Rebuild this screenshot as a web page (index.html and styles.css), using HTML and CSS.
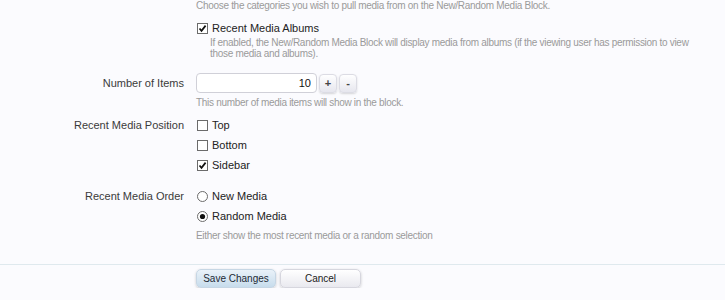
FILE: index.html
```html
<!DOCTYPE html>
<html lang="en">

<head>
    <meta charset="UTF-8">
    <title>Recent Media Options</title>
    <link rel="stylesheet" href="styles.css">
</head>

<body>

    <form class="options-form">

        <div class="row first-row">
            <div class="row-label"></div>
            <div class="row-ctrl">
                <p class="hint top-hint">Choose the categories you wish to pull media from on the New/Random Media Block.</p>
                <label class="opt">
                    <svg class="box" width="11" height="11" viewBox="0 0 11 11"><rect x="0.5" y="0.5" width="10" height="10" fill="#fff" stroke="#6b6b6b"/><path d="M2.5 5.5 L4.5 7.8 L8.6 2.6" fill="none" stroke="#111" stroke-width="1.7"/></svg>
                    Recent Media Albums
                </label>
                <p class="hint sub-hint">If enabled, the New/Random Media Block will display media from albums (if the viewing user has permission to view those media and albums).</p>
            </div>
        </div>

        <div class="row items-row">
            <div class="row-label">Number of Items</div>
            <div class="row-ctrl">
                <div class="spinbox">
                    <input class="num" type="text" value="10">
                    <span class="spin-btn">+</span>
                    <span class="spin-btn">-</span>
                </div>
                <p class="hint after-input">This number of media items will show in the block.</p>
            </div>
        </div>

        <div class="row position-row">
            <div class="row-label">Recent Media Position</div>
            <div class="row-ctrl">
                <label class="opt line">
                    <svg class="box" width="11" height="11" viewBox="0 0 11 11"><rect x="0.5" y="0.5" width="10" height="10" fill="#fff" stroke="#6b6b6b"/></svg>
                    Top
                </label>
                <label class="opt line">
                    <svg class="box" width="11" height="11" viewBox="0 0 11 11"><rect x="0.5" y="0.5" width="10" height="10" fill="#fff" stroke="#6b6b6b"/></svg>
                    Bottom
                </label>
                <label class="opt line">
                    <svg class="box" width="11" height="11" viewBox="0 0 11 11"><rect x="0.5" y="0.5" width="10" height="10" fill="#fff" stroke="#6b6b6b"/><path d="M2.5 5.5 L4.5 7.8 L8.6 2.6" fill="none" stroke="#111" stroke-width="1.7"/></svg>
                    Sidebar
                </label>
            </div>
        </div>

        <div class="row order-row">
            <div class="row-label">Recent Media Order</div>
            <div class="row-ctrl">
                <label class="opt line">
                    <svg class="box" width="11" height="11" viewBox="0 0 11 11"><circle cx="5.5" cy="5.5" r="5" fill="#fff" stroke="#6b6b6b"/></svg>
                    New Media
                </label>
                <label class="opt line">
                    <svg class="box" width="11" height="11" viewBox="0 0 11 11"><circle cx="5.5" cy="5.5" r="5" fill="#fff" stroke="#6b6b6b"/><circle cx="5.5" cy="5.5" r="2.6" fill="#111"/></svg>
                    Random Media
                </label>
                <p class="hint after-radio">Either show the most recent media or a random selection</p>
            </div>
        </div>

        <div class="submit-bar">
            <div class="row-label"></div>
            <div class="buttons">
                <button type="button" class="btn btn-primary">Save Changes</button>
                <button type="button" class="btn">Cancel</button>
            </div>
        </div>

    </form>

</body>

</html>
```

FILE: styles.css
```css
body {
    margin: 0;
    background-color: #fbfbfe;
    font-family: "Liberation Sans", Arial, sans-serif;
    font-size: 11px;
    color: #222222;
    overflow: hidden;
}

.options-form {
    margin: 0;
}

.row {
    display: grid;
    grid-template-columns: 184px 1fr;
    column-gap: 12px;
}

.row-label {
    text-align: right;
    color: #3a3a3a;
    line-height: 20px;
}

.row-ctrl {
    min-width: 0;
}

.hint {
    margin: 0;
    font-size: 10px;
    line-height: 11px;
    color: #9a9a9a;
    letter-spacing: -0.3px;
}

.top-hint {
    line-height: 12px;
}

.sub-hint {
    margin-top: 1px;
    padding-left: 14px;
    max-width: 490px;
}

.opt {
    display: flex;
    align-items: center;
    gap: 4px;
    line-height: 16px;
    margin-top: 8px;
    padding-left: 1px;
    color: #222222;
}

.opt.line {
    line-height: 20px;
    margin-top: 0;
}

.box {
    flex: none;
}

.items-row {
    margin-top: 14px;
}

.spinbox {
    display: flex;
    align-items: center;
    gap: 2px;
    height: 20px;
}

.num {
    box-sizing: border-box;
    width: 121px;
    height: 20px;
    margin: 0;
    padding: 0 5px;
    border: 1px solid #d0d0d8;
    border-radius: 4px;
    background: #ffffff;
    font-family: "Liberation Sans", Arial, sans-serif;
    font-size: 11px;
    color: #111111;
    text-align: right;
}

.spin-btn {
    box-sizing: border-box;
    width: 18px;
    height: 19px;
    border: 1px solid #dcdce4;
    border-radius: 4px;
    background: linear-gradient(to bottom, #ffffff, #e6e6ee);
    box-shadow: 0 1px 2px rgba(0, 0, 0, 0.15);
    text-align: center;
    line-height: 17px;
    font-size: 11px;
    font-weight: bold;
    color: #444444;
}

.after-input {
    margin-top: 4px;
}

.position-row {
    margin-top: 7px;
}

.order-row {
    margin-top: 11px;
}

.after-radio {
    margin-top: 4px;
}

.submit-bar {
    display: grid;
    grid-template-columns: 184px 1fr;
    column-gap: 12px;
    margin-top: 23px;
    border-top: 1px solid #dfe9ee;
    padding-top: 4px;
}

.buttons {
    display: flex;
    gap: 4px;
}

.btn {
    box-sizing: border-box;
    width: 81px;
    height: 19px;
    margin: 0;
    padding: 0;
    border: 1px solid #d6d6de;
    border-radius: 5px;
    background: linear-gradient(to bottom, #ffffff, #e9e9ef);
    box-shadow: 0 1px 3px rgba(0, 0, 0, 0.2);
    font-family: "Liberation Sans", Arial, sans-serif;
    font-size: 10px;
    color: #222222;
}

.btn-primary {
    width: 80px;
    border-color: #c6d6e4;
    background: linear-gradient(to bottom, #eaf2f9, #c7dcec);
    color: #1d2a36;
}
```
